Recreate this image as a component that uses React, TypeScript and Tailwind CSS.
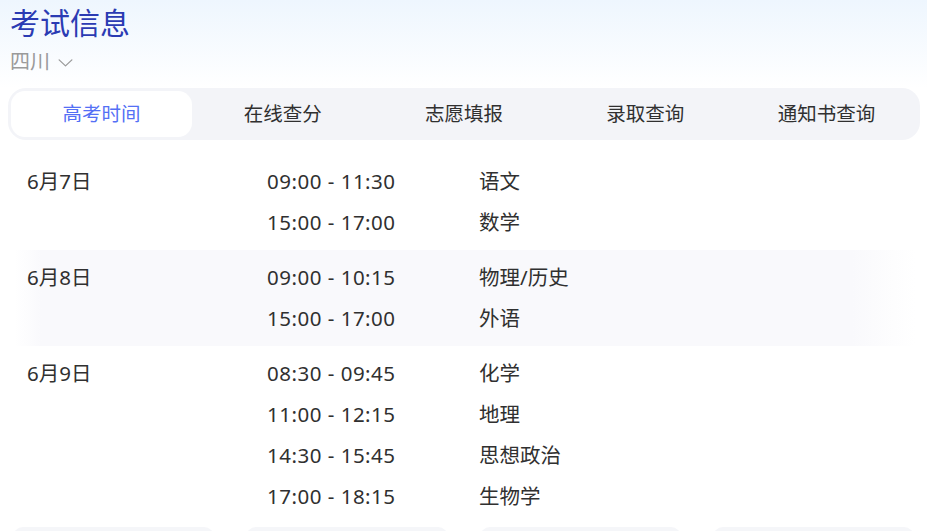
import React from 'react';

const FONT = "font-['Noto_Sans','Noto_Sans_CJK_SC',sans-serif]";

const tabs = ['高考时间', '在线查分', '志愿填报', '录取查询', '通知书查询'];

const schedule = [
  {
    date: '6月7日',
    items: [
      ['09:00 - 11:30', '语文'],
      ['15:00 - 17:00', '数学'],
    ],
  },
  {
    date: '6月8日',
    items: [
      ['09:00 - 10:15', '物理/历史'],
      ['15:00 - 17:00', '外语'],
    ],
  },
  {
    date: '6月9日',
    items: [
      ['08:30 - 09:45', '化学'],
      ['11:00 - 12:15', '地理'],
      ['14:30 - 15:45', '思想政治'],
      ['17:00 - 18:15', '生物学'],
    ],
  },
];

const Chevron = () => (
  <svg width="17" height="17" viewBox="0 0 16 16" fill="none" className="text-[#9a9a9a]">
    <path d="M2 5.5L8 11.2l6-5.7" stroke="currentColor" strokeWidth="1.2" strokeLinecap="round" strokeLinejoin="round" />
  </svg>
);

export default function App() {
  return (
    <div className={`w-[927px] h-[531px] overflow-hidden bg-white ${FONT}`}>
      {/* header */}
      <div className="bg-gradient-to-b from-[#eef6fe] to-white h-[88px] px-[10px] pt-[4px]">
        <h1 className="text-[30px] leading-[38px] text-[#2b3bb3]">考试信息</h1>
        <div className="flex items-center gap-[7px] mt-[6px] text-[20px] leading-[28px] text-[#9a9a9a]">
          <span>四川</span>
          <Chevron />
        </div>
      </div>

      {/* tabs */}
      <div className="mx-[8px] w-[912px] h-[52px] bg-[#f3f4f8] rounded-[18px] p-[3px] grid grid-cols-5">
        {tabs.map((t, i) => (
          <div
            key={t}
            className={`flex items-center justify-center text-[19.5px] ${
              i === 0 ? 'bg-white rounded-[14px] text-[#5470f5]' : 'text-[#303030]'
            }`}
          >
            {t}
          </div>
        ))}
      </div>

      {/* schedule */}
      <div className="mt-[14px] mx-[15px] w-[900px]">
        {schedule.map((g, gi) => (
          <div
            key={g.date}
            className={`flex px-[12px] py-[7px] text-[20.5px] leading-[41px] text-[#303030] ${
              gi === 1
                ? 'bg-[linear-gradient(to_right,rgba(249,249,252,0)_0%,#f9f9fc_3%,#f9f9fc_93%,rgba(249,249,252,0)_100%)]'
                : ''
            }`}
          >
            <div className="w-[240px] shrink-0">{g.date}</div>
            <div className="flex flex-col">
              {g.items.map(([time, subject]) => (
                <div key={time} className="flex">
                  <div className="w-[212px] shrink-0 tracking-[0.5px]">{time}</div>
                  <div>{subject}</div>
                </div>
              ))}
            </div>
          </div>
        ))}
      </div>

      {/* cards peeking at the bottom */}
      <div className="mt-[3px] mx-[13px] grid grid-cols-4 gap-[32px]">
        {[0, 1, 2, 3].map((i) => (
          <div key={i} className="h-[40px] bg-[#f5f6f9] rounded-[10px]" />
        ))}
      </div>
    </div>
  );
}
